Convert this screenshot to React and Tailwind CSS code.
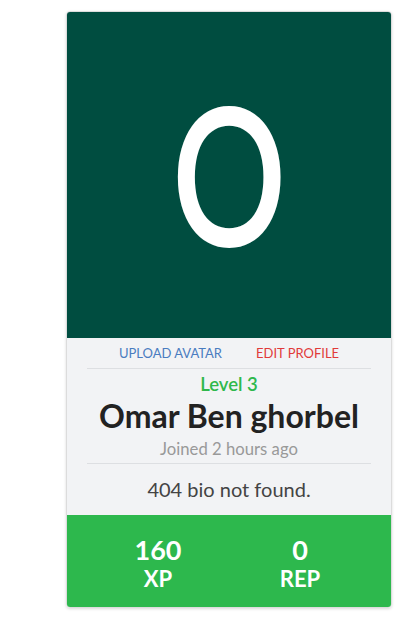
export default function App() {
  return (
    <div className="w-[416px] h-[625px] bg-white" style={{ fontFamily: "Lato, 'Noto Sans', sans-serif" }}>
      <div className="pt-[11px] pl-[66px]">
        <div className="w-[326px] rounded-[4px] border border-[#dcdcdc] overflow-hidden shadow-[0_1px_3px_rgba(0,0,0,0.15)]">
          <div className="h-[326px] bg-[#004d40] flex items-center justify-center overflow-hidden">
            <span className="text-white text-[188px] leading-none scale-x-[0.75] blur-[0.6px] -translate-y-[3px] [-webkit-text-stroke:4px_white]">O</span>
          </div>
          <div className="bg-[#f2f3f5] px-[20px] flex flex-col items-center">
            <div className="flex gap-[34px] h-[30px] items-center text-[13px] uppercase pt-[1px]">
              <span className="text-[#4a7cc0]">Upload Avatar</span>
              <span className="text-[#e13a3a]">Edit Profile</span>
            </div>
            <div className="w-full h-px bg-[#dddfe2]"></div>
            <div className="text-[#2fb84c] text-[18.5px] font-semibold leading-none mt-[6px]">Level 3</div>
            <div className="text-[#222] text-[32px] font-bold leading-none mt-[6px]">Omar Ben ghorbel</div>
            <div className="text-[#999] text-[16.7px] leading-none mt-[9px]">Joined 2 hours ago</div>
            <div className="w-full h-px bg-[#dddfe2] mt-[6px]"></div>
            <div className="text-[#444] text-[20px] leading-none h-[51px] flex items-center pb-[1px]">404 bio not found.</div>
          </div>
          <div className="bg-[#2db84d] h-[92px] px-[20px] pt-[3px] grid grid-cols-2 items-center text-white font-bold">
            <div className="flex flex-col items-center leading-none">
              <span className="text-[27px]">160</span>
              <span className="text-[22px] mt-[5px]">XP</span>
            </div>
            <div className="flex flex-col items-center leading-none">
              <span className="text-[27px]">0</span>
              <span className="text-[22px] mt-[5px]">REP</span>
            </div>
          </div>
        </div>
      </div>
    </div>
  );
}
